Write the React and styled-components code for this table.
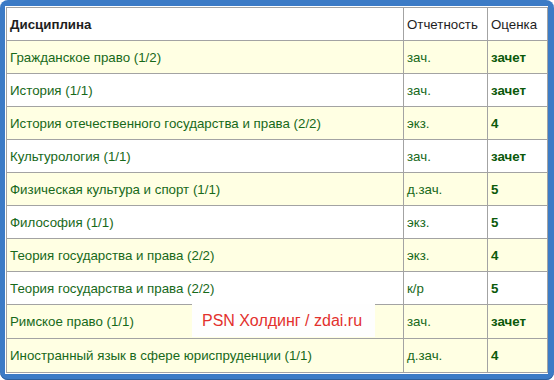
import React from "react";
import styled, { createGlobalStyle } from "styled-components";

const Global = createGlobalStyle`
  html, body { margin: 0; padding: 0; background: #ffffff; }
  body { font-family: "Liberation Sans", Arial, sans-serif; }
`;

const Frame = styled.div`
  position: relative;
  box-sizing: border-box;
  width: 554px;
  height: 380px;
  padding: 6px 6px 6px 5px;
  background: #3c7bc6;
  border-radius: 8px;
  box-shadow: inset 0 -1px 0 #2d5f9c;
`;

const Panel = styled.div`
  box-sizing: border-box;
  height: 368px;
  padding: 1px;
  background: #ffffff;
`;

const Table = styled.table`
  width: 541px;
  border-collapse: collapse;
  table-layout: fixed;
  font-size: 13.3px;
`;

const Row = styled.tr`
  height: ${(p) => (p.$tall ? 34 : 33)}px;
  background: ${(p) => (p.$tinted ? "#ffffe3" : "#ffffff")};
`;

const HeadCell = styled.th`
  border: 1px solid #a3a3a3;
  padding: 0 3px;
  text-align: left;
  color: #1e1e1e;
  font-weight: ${(p) => (p.$strong ? 700 : 400)};
  white-space: nowrap;
`;

const Cell = styled.td`
  border: 1px solid #a3a3a3;
  padding: 0 3px;
  color: ${(p) => (p.$grade ? "#0b590b" : "#17691a")};
  font-weight: ${(p) => (p.$grade ? 700 : 400)};
  white-space: nowrap;
`;

const Watermark = styled.div`
  position: absolute;
  left: 192px;
  top: 304px;
  width: 183px;
  height: 33px;
  box-sizing: border-box;
  padding-left: 10px;
  display: flex;
  align-items: center;
  background: #fefefe;
  color: #e3312d;
  font-family: "Liberation Sans", Arial, sans-serif;
  font-size: 16px;
`;

const rows = [
  ["Гражданское право (1/2)", "зач.", "зачет", true],
  ["История (1/1)", "зач.", "зачет", false],
  ["История отечественного государства и права (2/2)", "экз.", "4", true],
  ["Культурология (1/1)", "зач.", "зачет", false],
  ["Физическая культура и спорт (1/1)", "д.зач.", "5", true],
  ["Философия (1/1)", "экз.", "5", false],
  ["Теория государства и права (2/2)", "экз.", "4", true],
  ["Теория государства и права (2/2)", "к/р", "5", false],
  ["Римское право (1/1)", "зач.", "зачет", true, true],
  ["Иностранный язык в сфере юриспруденции (1/1)", "д.зач.", "4", true, true],
];

export default function App() {
  return (
    <>
      <Global />
      <Frame>
        <Panel>
          <Table>
            <colgroup>
              <col style={{ width: 397 }} />
              <col style={{ width: 84 }} />
              <col style={{ width: 60 }} />
            </colgroup>
            <thead>
              <Row>
                <HeadCell $strong>Дисциплина</HeadCell>
                <HeadCell>Отчетность</HeadCell>
                <HeadCell>Оценка</HeadCell>
              </Row>
            </thead>
            <tbody>
              {rows.map(([name, kind, grade, tinted, tall], i) => (
                <Row key={i} $tinted={tinted} $tall={tall}>
                  <Cell>{name}</Cell>
                  <Cell>{kind}</Cell>
                  <Cell $grade>{grade}</Cell>
                </Row>
              ))}
            </tbody>
          </Table>
        </Panel>
        <Watermark>PSN Холдинг / zdai.ru</Watermark>
      </Frame>
    </>
  );
}
